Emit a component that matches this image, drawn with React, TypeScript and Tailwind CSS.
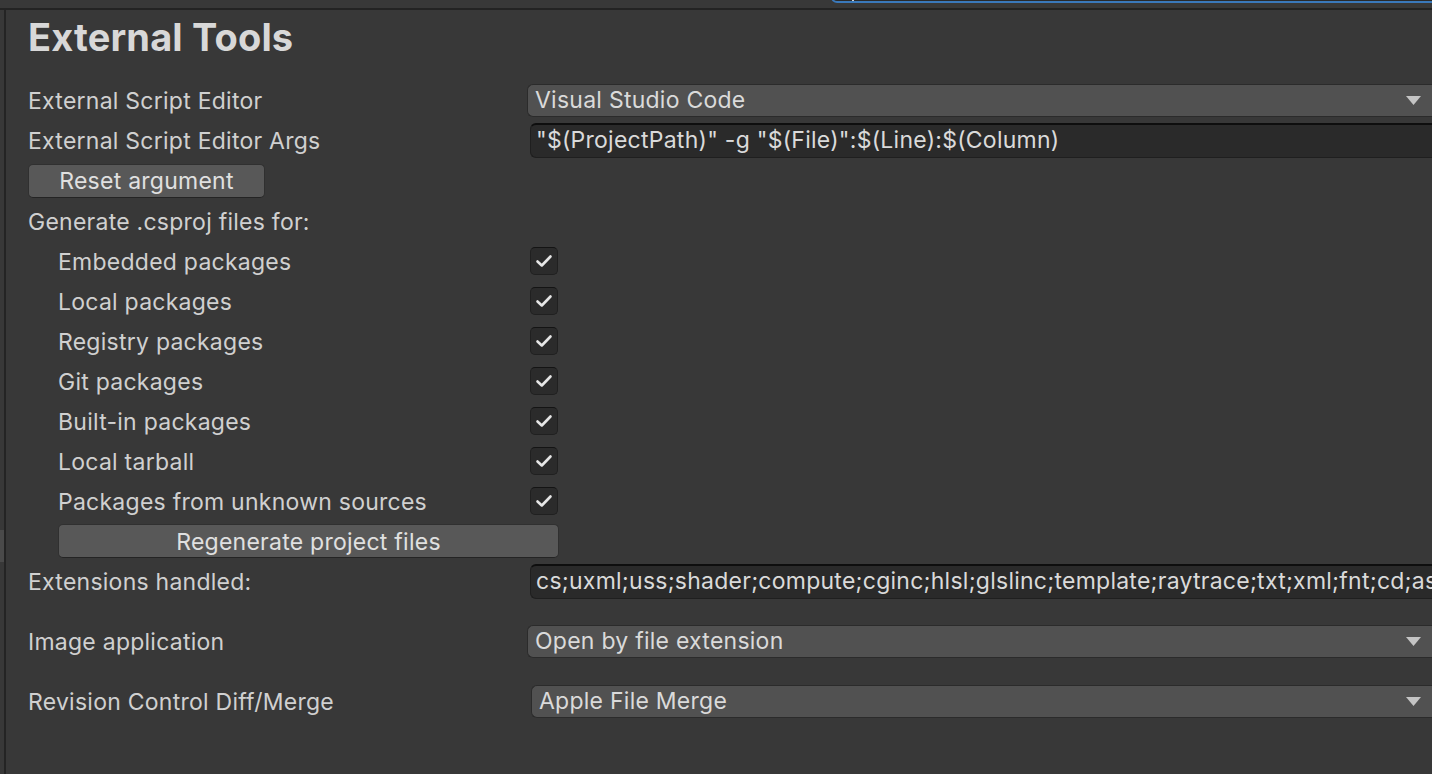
import { ReactNode } from "react";

const font = { fontFamily: "Inter, 'Noto Sans', sans-serif" };

const Arrow = () => (
  <svg width="15" height="9" viewBox="0 0 15 9" className="shrink-0">
    <path d="M0 0 H15 L7.5 9 Z" fill="#c4c4c4" />
  </svg>
);

const Dropdown = ({ value, offset = "ml-0" }: { value: string; offset?: string }) => (
  <div
    className={`${offset} flex h-[33px] min-w-0 flex-1 items-center justify-between rounded-l-[6px] border border-r-0 border-[#2b2b2b] bg-[#515151] pl-[7px] pr-[11px] text-[#dadada]`}
  >
    <span className="truncate">{value}</span>
    <Arrow />
  </div>
);

const TextField = ({ value }: { value: string }) => (
  <div className="ml-[3px] flex h-[35px] min-w-0 flex-1 items-center overflow-hidden whitespace-nowrap rounded-l-[6px] border border-r-0 border-[#1f1f1f] border-t-2 border-t-[#0e0e0e] bg-[#2a2a2a] pl-[5px] text-[#dadada]">
    {value}
  </div>
);

const Check = () => (
  <div className="ml-[3px] flex h-[28px] w-[28px] items-center justify-center rounded-[5px] border border-[#202020] border-t-[#141414] bg-[#2b2b2b]">
    <svg width="18" height="14" viewBox="0 0 18 14">
      <path
        d="M2.5 7.5 L6.8 11.5 L15.5 2.5"
        fill="none"
        stroke="#e6e6e6"
        strokeWidth="2.6"
        strokeLinecap="round"
        strokeLinejoin="round"
      />
    </svg>
  </div>
);

const Row = ({
  label,
  indent = false,
  children,
  className = "",
}: {
  label: string;
  indent?: boolean;
  children?: ReactNode;
  className?: string;
}) => (
  <div className={`flex h-[40px] items-center ${className}`}>
    <div className={`w-[499px] shrink-0 whitespace-nowrap pt-[2px] ${indent ? "pl-[30px]" : ""}`}>{label}</div>
    <div className="flex min-w-0 flex-1 items-center">{children}</div>
  </div>
);

const Button = ({ label, className }: { label: string; className: string }) => (
  <div
    className={`flex h-[34px] items-center justify-center rounded-[5px] border border-[#303030] border-b-[#242424] bg-[#585858] pt-[2px] text-[#e0e0e0] ${className}`}
  >
    {label}
  </div>
);

const packages = [
  "Embedded packages",
  "Local packages",
  "Registry packages",
  "Git packages",
  "Built-in packages",
  "Local tarball",
  "Packages from unknown sources",
];

export default function App() {
  return (
    <div
      className="relative flex h-[774px] w-[1432px] flex-col overflow-hidden bg-[#383838] text-[23px] tracking-[0.25px] text-[#d0d0d0]"
      style={font}
    >
      {/* search field peeking from the toolbar above */}
      <div className="absolute -top-[30px] left-[831px] h-[33px] w-[620px] rounded-[6px] border-2 border-[#3a79bb] bg-[#2a2a2a]">
        <div className="absolute bottom-0 left-[19px] h-[4px] w-[2px] bg-[#d0d0d0]" />
      </div>

      <div className="h-[8px] shrink-0" />
      <div className="h-[2px] shrink-0 bg-[#232323]" />

      <div className="flex flex-1">
        <div className="flex w-[4px] shrink-0 flex-col">
          <div className="h-[520px]" />
          <div className="h-[32px] bg-[#4a4a4a]" />
        </div>
        <div className="w-[2px] shrink-0 self-stretch bg-[#242424]" />

        <div className="min-w-0 flex-1 pl-[22px]">
          <div className="flex h-[70px] items-center pb-[16px]">
            <h1 className="text-[38px] font-bold tracking-[0.15px] text-[#d8d8d8]">External Tools</h1>
          </div>

          <Row label="External Script Editor">
            <Dropdown value="Visual Studio Code" />
          </Row>
          <Row label="External Script Editor Args">
            <TextField value={'"$(ProjectPath)" -g "$(File)":$(Line):$(Column)'} />
          </Row>
          <div className="flex h-[41px] items-center">
            <Button label="Reset argument" className="w-[237px]" />
          </div>
          <Row label="Generate .csproj files for:" />
          {packages.map((p) => (
            <Row key={p} label={p} indent>
              <Check />
            </Row>
          ))}
          <div className="flex h-[40px] items-center pl-[30px]">
            <Button label="Regenerate project files" className="w-[501px]" />
          </div>
          <Row label="Extensions handled:">
            <TextField value="cs;uxml;uss;shader;compute;cginc;hlsl;glslinc;template;raytrace;txt;xml;fnt;cd;asmdef;asmref;rsp;json" />
          </Row>
          <Row label="Image application" className="mt-[20px]">
            <Dropdown value="Open by file extension" />
          </Row>
          <Row label="Revision Control Diff/Merge" className="mt-[20px]">
            <Dropdown value="Apple File Merge" offset="ml-[4px]" />
          </Row>
        </div>
      </div>
    </div>
  );
}
